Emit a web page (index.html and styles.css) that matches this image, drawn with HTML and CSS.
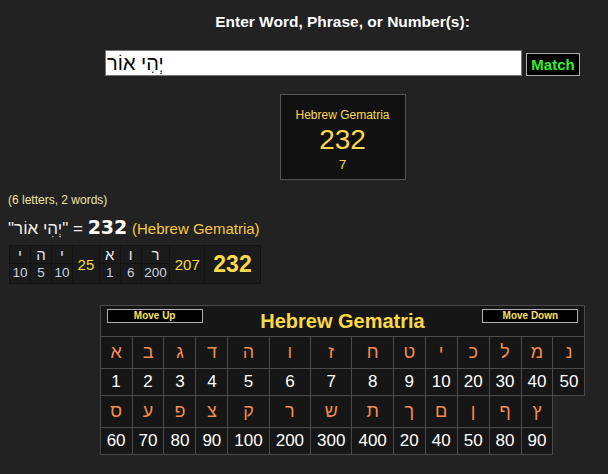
FILE: index.html
```html
<!DOCTYPE html>
<html>
<head>
<meta charset="utf-8">
<title>Gematria</title>
<link rel="stylesheet" href="styles.css">
</head>
<body>
<div class="center">
  <div class="title">Enter Word, Phrase, or Number(s):</div>
  <div class="form-row">
    <input class="word-input" type="text" value="יְהִי אוֹר">
    <button class="match-btn">Match</button>
  </div>
  <div class="result-box">
    <div class="rb-name">Hebrew Gematria</div>
    <div class="rb-value">232</div>
    <div class="rb-reduced">7</div>
  </div>
</div>
<div class="left">
  <div class="info">(6 letters, 2 words)</div>
  <div class="equation">"<bdi>יְהִי אוֹר</bdi>" = <span class="eq-num">232</span> <span class="eq-cipher">(Hebrew Gematria)</span></div>
  <table class="breakdown">
    <tr>
      <td class="bd-letter">י</td>
      <td class="bd-letter">ה</td>
      <td class="bd-letter">י</td>
      <td class="bd-sum" rowspan="2">25</td>
      <td class="bd-letter">א</td>
      <td class="bd-letter">ו</td>
      <td class="bd-letter">ר</td>
      <td class="bd-sum" rowspan="2">207</td>
      <td class="bd-total" rowspan="2">232</td>
    </tr>
    <tr>
      <td class="bd-num">10</td>
      <td class="bd-num">5</td>
      <td class="bd-num">10</td>
      <td class="bd-num">1</td>
      <td class="bd-num">6</td>
      <td class="bd-num">200</td>
    </tr>
  </table>
</div>
<div class="center">
  <table class="cipher-table">
    <tr>
      <td class="ct-head" colspan="14">
        <div class="ct-head-inner">
          <button class="move-btn">Move Up</button>
          <span class="ct-title">Hebrew Gematria</span>
          <button class="move-btn">Move Down</button>
        </div>
      </td>
    </tr>
    <tr>
      <td class="ct-letter">א</td><td class="ct-letter">ב</td><td class="ct-letter">ג</td><td class="ct-letter">ד</td><td class="ct-letter">ה</td><td class="ct-letter">ו</td><td class="ct-letter">ז</td><td class="ct-letter">ח</td><td class="ct-letter">ט</td><td class="ct-letter">י</td><td class="ct-letter">כ</td><td class="ct-letter">ל</td><td class="ct-letter">מ</td><td class="ct-letter">נ</td>
    </tr>
    <tr>
      <td class="ct-num">1</td><td class="ct-num">2</td><td class="ct-num">3</td><td class="ct-num">4</td><td class="ct-num">5</td><td class="ct-num">6</td><td class="ct-num">7</td><td class="ct-num">8</td><td class="ct-num">9</td><td class="ct-num">10</td><td class="ct-num">20</td><td class="ct-num">30</td><td class="ct-num">40</td><td class="ct-num">50</td>
    </tr>
    <tr>
      <td class="ct-letter">ס</td><td class="ct-letter">ע</td><td class="ct-letter">פ</td><td class="ct-letter">צ</td><td class="ct-letter">ק</td><td class="ct-letter">ר</td><td class="ct-letter">ש</td><td class="ct-letter">ת</td><td class="ct-letter">ך</td><td class="ct-letter">ם</td><td class="ct-letter">ן</td><td class="ct-letter">ף</td><td class="ct-letter">ץ</td>
    </tr>
    <tr>
      <td class="ct-num">60</td><td class="ct-num">70</td><td class="ct-num">80</td><td class="ct-num">90</td><td class="ct-num">100</td><td class="ct-num">200</td><td class="ct-num">300</td><td class="ct-num">400</td><td class="ct-num">20</td><td class="ct-num">40</td><td class="ct-num">50</td><td class="ct-num">80</td><td class="ct-num">90</td>
    </tr>
  </table>
</div>
</body>
</html>
```

FILE: styles.css
```css
* {
  box-sizing: border-box;
}

body {
  margin: 0;
  background: #222222;
  font-family: "Liberation Sans", Arial, sans-serif;
  color: #ffffff;
}

.center {
  padding-left: 77px;
}

.title {
  padding-top: 13px;
  text-align: center;
  font-weight: bold;
  font-size: 15.5px;
  line-height: 18px;
  color: #ffffff;
}

.form-row {
  display: flex;
  justify-content: center;
  align-items: flex-end;
  gap: 4px;
  margin-top: 19px;
}

.word-input {
  width: 417px;
  height: 26px;
  margin: 0;
  padding: 0 1px;
  border: 1px solid #767676;
  background: #ffffff;
  color: #000000;
  font: 20px "Liberation Sans", Arial, sans-serif;
  outline: none;
}

.match-btn {
  width: 54px;
  height: 23px;
  margin: 0;
  padding: 0;
  background: #000000;
  border: 1px solid #aaaaaa;
  color: #33ee33;
  font: bold 15px "Liberation Sans", Arial, sans-serif;
}

.result-box {
  width: 126px;
  height: 86px;
  margin: 18px auto 0;
  padding-top: 13px;
  border: 1px solid #555555;
  background: #111111;
  text-align: center;
  color: #fbd94f;
}

.rb-name {
  font-size: 12px;
  line-height: 14px;
}

.rb-value {
  font-size: 28px;
  line-height: 36px;
}

.rb-reduced {
  font-size: 13px;
  line-height: 14px;
}

.left {
  padding-left: 8px;
}

.info {
  margin-top: 13px;
  font-size: 12px;
  line-height: 14px;
  color: #f0e2a4;
}

.equation {
  margin-top: 9px;
  font-size: 17px;
  line-height: 22px;
  color: #eeeeee;
}

.eq-num {
  font-family: "DejaVu Sans", sans-serif;
  font-weight: bold;
  font-size: 19px;
  color: #ffffff;
}

.eq-cipher {
  font-size: 15px;
  color: #f5c84a;
}

.breakdown {
  border-collapse: collapse;
  margin-top: 5px;
  margin-left: 1px;
}

.breakdown td {
  background: #1b1b1b;
  border: 1px solid #131313;
  text-align: center;
  padding: 0 2.5px;
}

.breakdown td.bd-letter {
  width: 21px;
  font-size: 15px;
  line-height: 17px;
  color: #e4e8f0;
}

.breakdown td.bd-num {
  font-size: 13.5px;
  line-height: 18.7px;
  color: #c9d2e0;
}

.breakdown td.bd-sum {
  padding: 0 4.5px;
  font-size: 15px;
  color: #fbd94f;
}

.breakdown td.bd-total {
  padding: 0 8px;
  font-size: 23px;
  font-weight: bold;
  color: #fbd94f;
}

.cipher-table {
  border-collapse: collapse;
  margin: 21px auto 0;
}

.cipher-table td {
  border: 1px solid #4a4a4a;
  background: #161616;
  text-align: center;
}

.cipher-table td.ct-head {
  padding: 3px 6px;
}

.ct-head-inner {
  display: flex;
  justify-content: space-between;
  align-items: flex-start;
}

.move-btn {
  width: 96px;
  height: 14px;
  margin: 0;
  padding: 0;
  background: #000000;
  border: 1px solid #b0b0b0;
  color: #f8e068;
  font: bold 10px/12px "Liberation Sans", Arial, sans-serif;
}

.ct-title {
  font-size: 20px;
  font-weight: bold;
  line-height: 24px;
  color: #fcd848;
}

.cipher-table td.ct-letter {
  padding: 5px 6px;
  font-size: 18px;
  line-height: 21px;
  color: #f28c53;
}

.cipher-table td.ct-num {
  padding: 3px 6px;
  font-size: 17px;
  line-height: 20px;
  color: #ffffff;
}
```
